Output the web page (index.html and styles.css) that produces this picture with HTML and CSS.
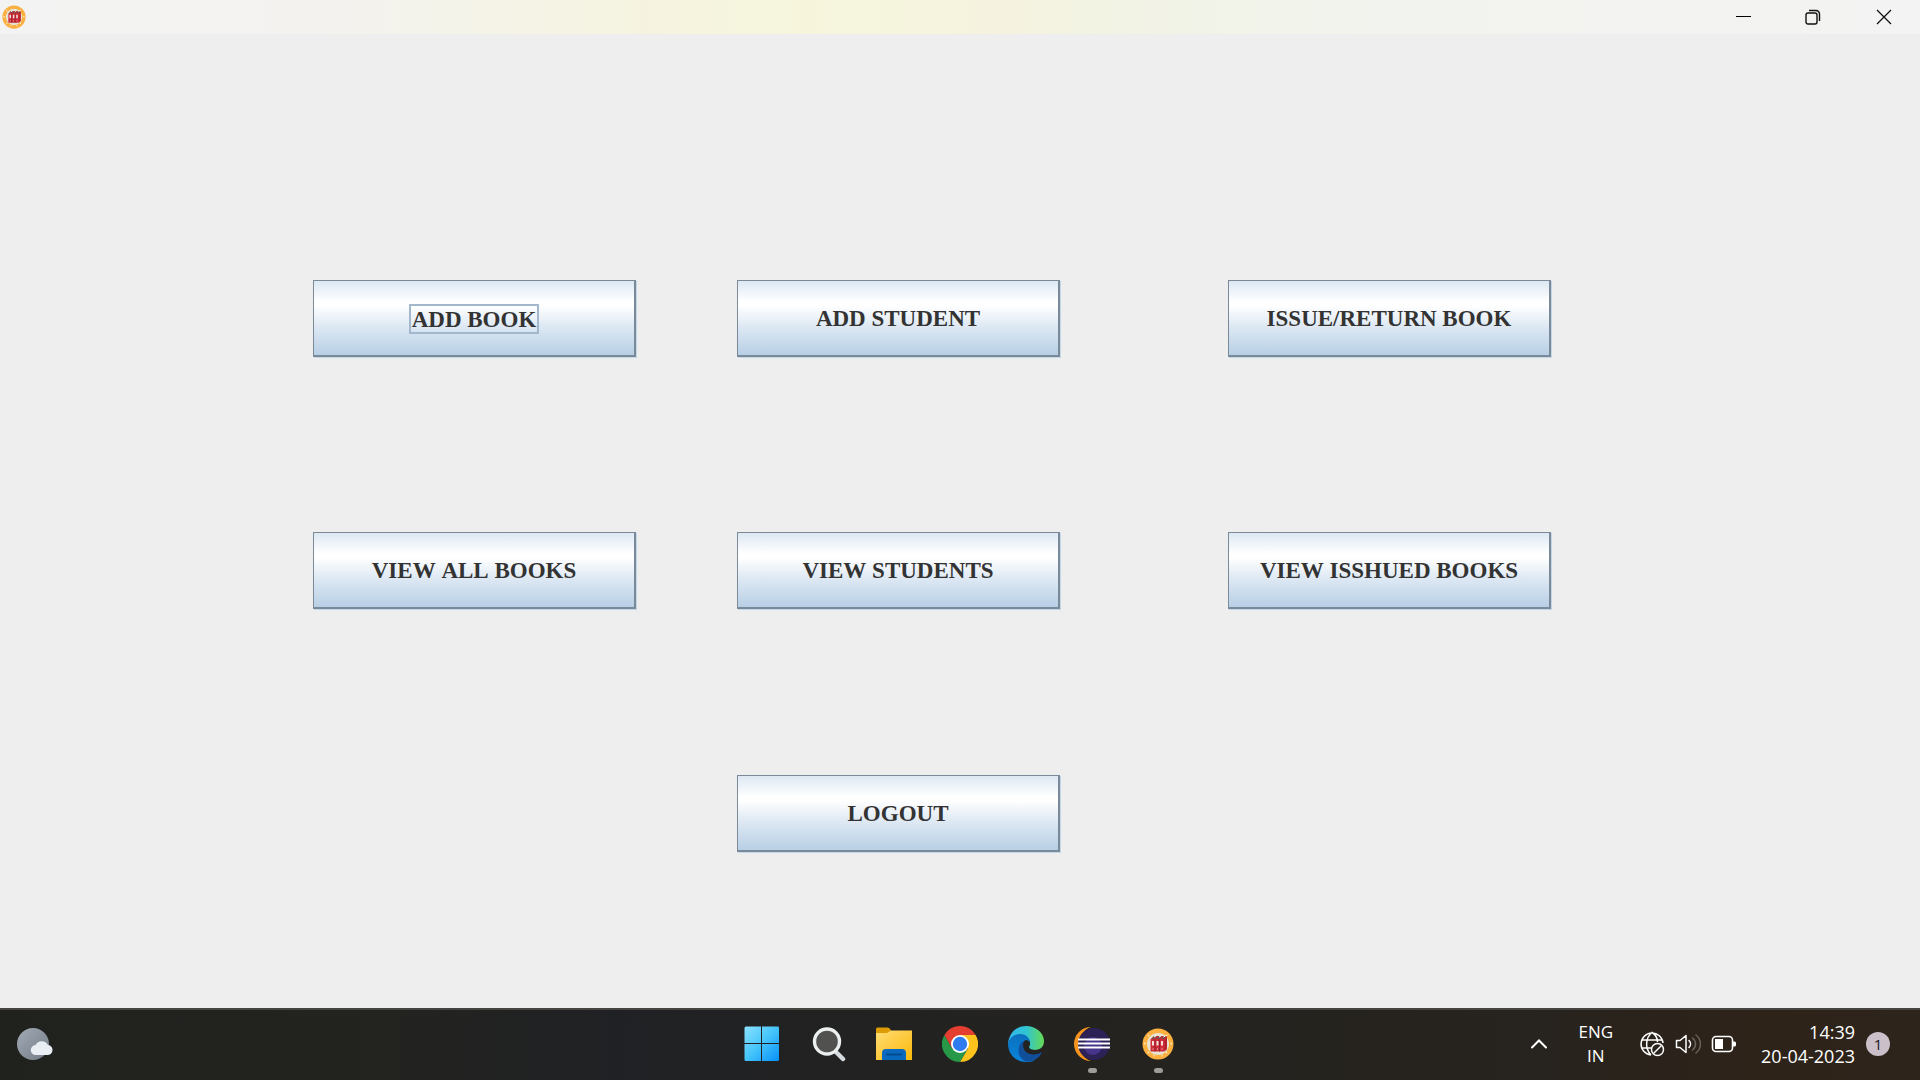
FILE: index.html
```html
<!DOCTYPE html>
<html lang="en">
  <head>
    <meta charset="utf-8" />
    <title>Library</title>
    <link rel="stylesheet" href="styles.css">
  </head>
  <body>
    <svg class="defs" aria-hidden="true">
      <defs>
        <linearGradient id="winBlue" x1="0" y1="0" x2="1" y2="1">
          <stop offset="0" stop-color="#8be2fe" />
          <stop offset="0.5" stop-color="#44c4fb" />
          <stop offset="1" stop-color="#0790f8" />
        </linearGradient>
        <linearGradient id="moonGrey" x1="0" y1="0" x2="1" y2="1">
          <stop offset="0" stop-color="#a2abb5" />
          <stop offset="1" stop-color="#737c87" />
        </linearGradient>
        <linearGradient id="folderYellow" x1="0" y1="0" x2="1" y2="1">
          <stop offset="0" stop-color="#ffdc74" />
          <stop offset="1" stop-color="#fbb90b" />
        </linearGradient>
        <linearGradient id="edgeTop" x1="0" y1="0" x2="1" y2="0">
          <stop offset="0" stop-color="#35b5ec" />
          <stop offset="0.5" stop-color="#2fc4d4" />
          <stop offset="1" stop-color="#65db55" />
        </linearGradient>
        <linearGradient id="edgeBody" x1="0" y1="0" x2="0" y2="1">
          <stop offset="0" stop-color="#0b70bd" />
          <stop offset="1" stop-color="#0a84dc" />
        </linearGradient>
        <clipPath id="eclipseDisc"><circle cx="20" cy="18" r="16" /></clipPath>
        <symbol id="books" viewBox="0 0 32 32">
          <circle cx="16" cy="16" r="15.5" fill="#fbb040" />
          <circle cx="16" cy="16" r="11" fill="#e7e3d3" />
          <path d="M2 15.500h1.500M28.500 15.500H30M6 7l1 1M25 7l-1 1M6 24l1 1M25 24l-1 1M11.500 27.500h1M19.500 27.500h1" stroke="#fff6df" stroke-width="1.500" />
          <path d="M8.500 11.500 12 8h12.500v13L22 23.500H8.500z" fill="#cf2c38" />
          <path d="M9 11l3.500-3H15l-3 3zM14 11l3.500-3H20l-3 3zM19 11l3-3h2.500L22 11z" fill="#6b5148" />
          <path d="M12 9l2-1M17 9l2-1M21.500 9l2-1" stroke="#fff" stroke-width="1" />
          <path d="M22.500 11.500 25 8v13l-2.500 2.500z" fill="#b3222d" />
          <path d="M13 11.500v12M17.500 11.500v12" stroke="#93202a" stroke-width="1" />
          <path d="M10 13h2v4.500h-2zM14.500 13h2v4.500h-2zM19 13h2v4.500h-2zM10.500 20.500h1v1h-1zM15 20.500h1v1h-1zM19.500 20.500h1v1h-1z" fill="#f6dfdf" />
        </symbol>
      </defs>
    </svg>

    <div class="screen">
      <header class="titlebar">
        <svg class="app-icon"><use href="#books" /></svg>
        <div class="window-controls">
          <button class="window-button" aria-label="Minimize">
            <svg width="16" height="16" viewBox="0 0 16 16"><path d="M1 7.500h15" stroke="#000" /></svg>
          </button>
          <button class="window-button" aria-label="Restore">
            <svg width="16" height="16" viewBox="0 0 16 16" fill="none" stroke="#111" stroke-width="1.4">
              <rect x="1" y="4" width="11" height="11" rx="2" />
              <path d="M4 1.500h7a3.500 3.500 0 0 1 3.500 3.500v7" />
            </svg>
          </button>
          <button class="window-button close" aria-label="Close">
            <svg width="16" height="16" viewBox="0 0 16 16"><path d="M1 1l14 14M15 1L1 15" stroke="#111" stroke-width="1.3" /></svg>
          </button>
        </div>
      </header>

      <main class="menu">
        <button class="menu-button left top"><span class="focus-label">ADD BOOK</span></button>
        <button class="menu-button center top">ADD STUDENT</button>
        <button class="menu-button right top">ISSUE/RETURN BOOK</button>
        <button class="menu-button left middle">VIEW ALL BOOKS</button>
        <button class="menu-button center middle">VIEW STUDENTS</button>
        <button class="menu-button right middle">VIEW ISSHUED BOOKS</button>
        <button class="menu-button center bottom">LOGOUT</button>
      </main>

      <footer class="taskbar">
        <button class="weather" aria-label="Weather">
          <svg width="36" height="36" viewBox="0 0 36 36">
            <circle cx="16" cy="18" r="16" fill="url(#moonGrey)" />
            <path d="M19 29a5 5 0 0 1-.5-10 7 7 0 0 1 12.500 0 5 5 0 0 1-1 10z" fill="#e9edf4" />
          </svg>
        </button>

        <nav class="apps">
          <button class="app" aria-label="Start">
            <svg width="36" height="36" viewBox="0 0 36 36" fill="url(#winBlue)">
              <path d="M2 .5h15V17H.5V2A1.500 1.500 0 0 1 2 .5zM18 .5h16A1.500 1.500 0 0 1 35 2v15H18zM.5 18H17v17H2A1.500 1.500 0 0 1 .5 34zM18 18h17v16a1.500 1.500 0 0 1-1.500 1H18z" />
            </svg>
          </button>
          <button class="app" aria-label="Search">
            <svg width="36" height="36" viewBox="0 0 36 36">
              <path d="M25 25l8 8" stroke="#d5dbdf" stroke-width="4.500" stroke-linecap="round" />
              <circle cx="17" cy="15.500" r="12.500" fill="#51514f" stroke="#eceff0" stroke-width="3.400" />
            </svg>
          </button>
          <button class="app" aria-label="File Explorer">
            <svg width="36" height="36" viewBox="0 0 36 36">
              <path d="M0 3a1.500 1.500 0 0 1 1.500-1.500H11c2 0 3 1 4 3V10H0z" fill="#dd9b05" />
              <path d="M0 7h11l4-2.500h21V34H0z" fill="url(#folderYellow)" />
              <path d="M6 34v-7a4 4 0 0 1 4-4h16a4 4 0 0 1 4 4v7z" fill="#0869be" />
              <path d="M11 28.500h14" stroke="#064b8d" stroke-width="2" stroke-linecap="round" />
            </svg>
          </button>
          <button class="app" aria-label="Chrome">
            <svg width="36" height="36" viewBox="0 0 36 36">
              <path d="M18 9h15.600A18 18 0 0 1 18 36l7.800-13.500z" fill="#fcc31d" />
              <path d="M10.200 22.500 2.400 9A18 18 0 0 0 18 36l7.800-13.500z" fill="#279847" />
              <path d="M18 9h15.600A18 18 0 0 0 2.400 9l7.800 13.500z" fill="#e43e31" />
              <circle cx="18" cy="18" r="9" fill="#fff" />
              <circle cx="18" cy="18" r="7.200" fill="#2e7cf0" />
            </svg>
          </button>
          <button class="app" aria-label="Edge">
            <svg width="36" height="36" viewBox="0 0 36 36">
              <path d="M0 18C1 7 8 0 18 0s18 7 18 15c0 6-4 9-9 9-4 0-6-1-6-3 0-1 1-2 1-4 0-4-3-7-8-7-7 0-12 4-14 8z" fill="url(#edgeTop)" />
              <path d="M0 18C1 12 6 8 12 8c7 0 10 5 10 9-1-2-3-3-5-2-4 2-6 9-2 14 3 4 8 6 12 5-3 2-6 2-9 2C8 36 0 28 0 18z" fill="url(#edgeBody)" />
              <path d="M14 16C9 20 9 31 17 35c6 2 13-2 16-7 1-2 0-2-1-1-7 3-14 1-16-4-1-3-1-5 1-8z" fill="#124f9b" />
              <path d="M16 15c2-1.500 5-.5 6 2 0 2-1 3-1 4 0 2 2 3 6 3 2 0 4-.5 5.500-1.500L31 27c-6 2-12 1-15-4-1-3-1-5 0-8z" fill="#232320" />
            </svg>
          </button>
          <button class="app running" aria-label="Eclipse">
            <svg width="36" height="36" viewBox="0 0 36 36">
              <path d="M17 1A17 17 0 0 0 17 35 18 18 0 0 1 17 1z" fill="#f7941e" />
              <circle cx="20" cy="18" r="16" fill="#2c2255" />
              <g clip-path="url(#eclipseDisc)">
                <circle cx="19" cy="20" r="9" fill="#46358a" />
              </g>
              <path d="M4 13.500h32M4 17.500h32M4 21.500h32" stroke="#fff" stroke-width="1.800" />
            </svg>
          </button>
          <button class="app running" aria-label="Library">
            <svg width="32" height="32"><use href="#books" /></svg>
          </button>
        </nav>

        <div class="tray">
          <button class="tray-button chevron" aria-label="Show hidden icons">
            <svg width="18" height="12" viewBox="0 0 18 12"><path d="M2 9.500l7-7 7 7" fill="none" stroke="#fff" stroke-width="2" stroke-linecap="round" /></svg>
          </button>
          <button class="tray-button language">ENG<br />IN</button>
          <button class="tray-button status" aria-label="Network, volume and battery">
            <svg width="26" height="26" viewBox="0 0 26 26" fill="none" stroke="#fff" stroke-width="1.500">
              <path d="M12 24A11 11 0 1 1 24 12M12 24C6 18 6 7 13 1.500 17 4 18.500 8 18.500 11M2.500 9h21M2.500 17H12" />
              <circle cx="18.500" cy="18.500" r="6" />
              <path d="M14.500 22.500l8-8" />
            </svg>
            <svg width="26" height="26" viewBox="0 0 26 26" fill="none" stroke="#fff" stroke-width="1.500" stroke-linecap="round" stroke-linejoin="round">
              <path d="M1.500 9.500H5l6-5v17l-6-5H1.500zM14 9.500c2 2 2 5 0 7" />
              <path d="M17.500 7c4 3 4 9 0 12M21 4c6 5 6 13 0 18" stroke="#69655f" />
            </svg>
            <svg width="26" height="26" viewBox="0 0 26 26">
              <rect x="1.500" y="5.500" width="20" height="15" rx="3.500" fill="none" stroke="#fff" stroke-width="1.600" />
              <path d="M4 8h8v10H4zM22 10.500h1.500A1.500 1.500 0 0 1 25 12v2a1.500 1.500 0 0 1-1.500 1.500H22z" fill="#fff" />
            </svg>
          </button>
          <button class="tray-button clock">14:39<br />20-04-2023</button>
          <button class="badge" aria-label="1 notification">1</button>
        </div>
      </footer>
    </div>
  </body>
</html>
```

FILE: styles.css
```css
* {
  box-sizing: border-box;
}
body {
  margin: 0;
  background-color: #eeeeee;
  font-family: "Open Sans", "Noto Sans", sans-serif;
}
button {
  margin: 0;
  padding: 0;
  border: none;
  background: none;
  color: inherit;
  font-family: inherit;
}
svg {
  display: block;
}
.defs {
  position: absolute;
  width: 0;
  height: 0;
}
.screen {
  display: flex;
  flex-direction: column;
  min-height: 100vh;
}

/* title bar */
.titlebar {
  display: flex;
  justify-content: space-between;
  align-items: center;
  height: 34px;
  padding-left: 2px;
  padding-bottom: 1px;
  background-image: linear-gradient(
    to right,
    #f3f3f3 0%,
    #f3f2ef 17%,
    #f5f3e1 32%,
    #f6f5dc 42%,
    #f5f3df 52%,
    #f2f3e6 60%,
    #f2f3ee 72%,
    #f3f3f3 100%
  );
}
.app-icon {
  width: 24px;
  height: 24px;
}
.window-controls {
  display: flex;
}
.window-button {
  display: flex;
  justify-content: center;
  align-items: center;
  width: 70px;
  height: 32px;
}
.window-button.close {
  width: 72px;
}

/* menu buttons */
.menu {
  flex: 1;
  display: grid;
  grid-template-columns: 313fr 323px 101fr 323px 168fr 323px 369fr;
  grid-template-rows: 246fr 77px 175fr 77px 166fr 77px 156fr;
}
.menu-button {
  padding-top: 2px;
  border: 1px solid #7a8a99;
  border-right-width: 2px;
  border-bottom-width: 2px;
  box-shadow: 1px 1px 0 #c3d7e9;
  background-image: linear-gradient(
    to bottom,
    #dde8f3 0%,
    #ffffff 28%,
    #ffffff 33%,
    #dde8f3 62%,
    #b8cfe5 100%
  );
  color: #333333;
  font-family: "Liberation Serif", serif;
  font-size: 23px;
  font-weight: bold;
  font-kerning: none;
}
.left {
  grid-column: 2;
}
.center {
  grid-column: 4;
}
.right {
  grid-column: 6;
}
.top {
  grid-row: 2;
}
.middle {
  grid-row: 4;
}
.bottom {
  grid-row: 6;
}
.focus-label {
  display: inline-block;
  padding: 1px 1px 0;
  border: 2px solid #a3b8cc;
  line-height: 25px;
}

/* taskbar */
.taskbar {
  display: grid;
  grid-template-columns: 1fr auto 1fr;
  align-items: center;
  height: 72px;
  padding-bottom: 2px;
  border-top: 2px solid #454440;
  background-image: linear-gradient(
    to right,
    #20221e 0%,
    #232320 20%,
    #202124 32%,
    #24231f 60%,
    #27231e 80%,
    #2e2319 92%,
    #2d241b 100%
  );
  color: #ffffff;
}
.weather {
  justify-self: start;
  margin-left: 17px;
}
.apps {
  display: flex;
}
.app {
  position: relative;
  display: flex;
  justify-content: center;
  align-items: center;
  width: 66px;
  height: 68px;
}
.running::after {
  content: "";
  position: absolute;
  bottom: 5px;
  width: 9px;
  height: 5px;
  border-radius: 3px;
  background-color: #9d9c9a;
}
.tray {
  justify-self: end;
  display: flex;
  align-items: center;
  margin-right: 30px;
}
.tray-button {
  font-size: 17px;
  line-height: 24px;
}
.chevron {
  margin-right: 30px;
}
.language {
  margin-right: 26px;
}
.status {
  display: flex;
  gap: 10px;
  margin-right: 24px;
}
.clock {
  margin-right: 11px;
  font-size: 18px;
  text-align: right;
}
.badge {
  width: 24px;
  height: 24px;
  border-radius: 50%;
  background-color: #cbbfc9;
  color: #1c1a1c;
  font-size: 15px;
  line-height: 24px;
}
```
